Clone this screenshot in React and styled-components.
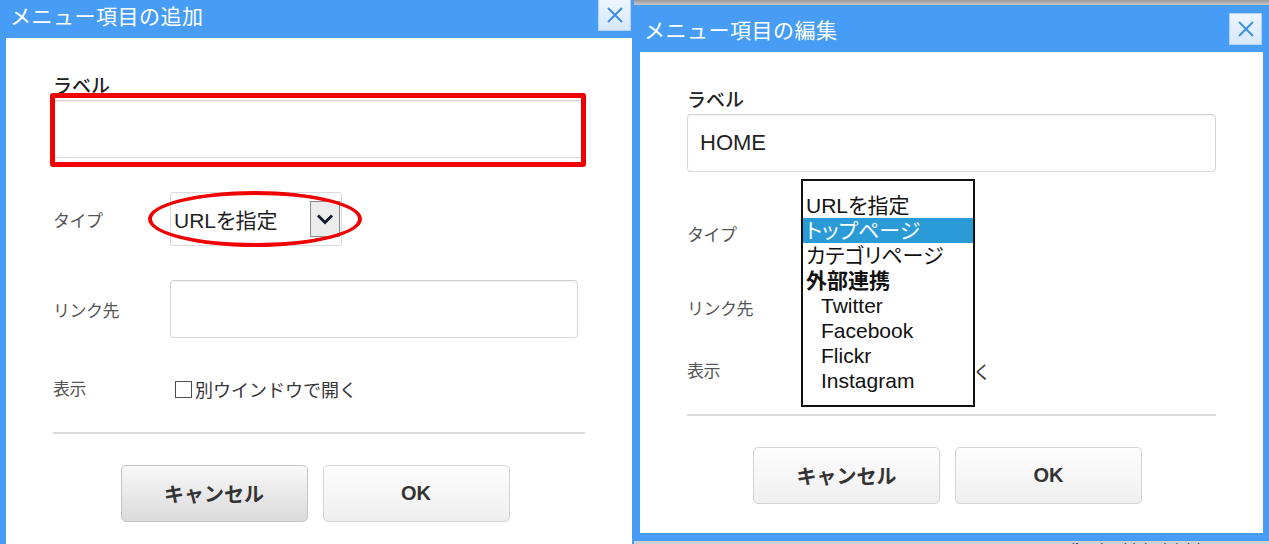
import styled, { createGlobalStyle } from "styled-components";

const GlobalStyle = createGlobalStyle`
  html, body {
    margin: 0;
    padding: 0;
  }
  body {
    font-family: "Liberation Sans", "Noto Sans CJK JP", sans-serif;
    background: #fff;
  }
`;

// two dialog captures side by side
const Page = styled.div`
  display: flex;
  width: 1269px;
  height: 544px;
  overflow: hidden;
`;

const Shot = styled.div`
  flex: none;
  width: ${p => p.$width}px;
  height: 544px;
  overflow: hidden;
  display: flex;
  flex-direction: column;
  background: #d2d2d2;
`;

const TopStrip = styled.div`
  flex: none;
  height: 5px;
  background: linear-gradient(#9a9a9a, #c6c6c6);
`;

const Footer = styled.div`
  flex: 1;
  display: flex;
  gap: 170px;
  padding-left: 238px;
  overflow: hidden;
  background: #d0d0d0;
  font-size: 14px;
  line-height: 14px;
  color: #1d3c78;
  span {
    margin-top: 1px;
    text-decoration: underline;
  }
`;

const Dialog = styled.div`
  flex: none;
  width: ${p => p.$width}px;
  margin-top: ${p => p.$offset || 0}px;
  box-sizing: border-box;
  padding: 0 6px 8px;
  background: #479df5;
`;

const TitleBar = styled.div`
  height: 47px;
  display: flex;
  align-items: center;
  justify-content: space-between;
  padding-left: 4px;
  padding-right: 1px;
`;

const Title = styled.div`
  font-family: "Noto Sans CJK JP", sans-serif;
  font-size: 21px;
  color: #fff;
  letter-spacing: 0.5px;
`;

const CloseButton = styled.button`
  width: 33px;
  height: 32px;
  padding: 0;
  display: flex;
  align-items: center;
  justify-content: center;
  border: 1px solid #b7d3f3;
  background: linear-gradient(#edf5ff, #d7e8fc);
`;

const Body = styled.div`
  background: #fff;
  padding: 36px 47px ${p => p.$bottom || 28}px;
  display: flex;
  flex-direction: column;
`;

const FieldTitle = styled.div`
  font-family: "Noto Sans CJK JP", sans-serif;
  font-size: 19px;
  font-weight: 500;
  line-height: 22px;
  color: #222;
  margin-bottom: 4px;
`;

const Marked = styled.div`
  position: relative;
`;

const RedBox = styled.div`
  position: absolute;
  left: -3px;
  right: -1px;
  top: -7px;
  bottom: -9px;
  border: 5px solid #f00000;
  border-radius: 3px;
`;

const TextInput = styled.div`
  box-sizing: border-box;
  width: ${p => (p.$width ? `${p.$width}px` : "100%")};
  height: ${p => p.$height || 58}px;
  border: 1px solid #d8d8d8;
  border-top-color: #cfcfcf;
  border-radius: 4px;
  box-shadow: inset 0 1px 2px rgba(0, 0, 0, 0.06);
  display: flex;
  align-items: center;
  padding: 0 12px;
  font-size: 22px;
  color: #222;
`;

const Row = styled.div`
  display: grid;
  grid-template-columns: 117px 1fr;
  align-items: center;
  height: ${p => p.$h}px;
  margin-top: 34px;
`;

const RowLabel = styled.div`
  font-family: "Noto Sans CJK JP", sans-serif;
  font-size: 17px;
  color: #555;
  letter-spacing: -0.5px;
`;

const Control = styled.div`
  position: relative;
  display: flex;
  align-items: center;
  height: 100%;
`;

const Select = styled.div`
  box-sizing: border-box;
  width: 172px;
  height: 54px;
  border: 1px solid #dadada;
  border-radius: 3px;
  display: flex;
  align-items: center;
  justify-content: space-between;
  padding: 0 1px 0 3px;
  font-size: 21px;
  color: #1e1e1e;
  font-feature-settings: "palt";
`;

const ArrowBox = styled.div`
  width: 30px;
  height: 36px;
  box-sizing: border-box;
  border: 1px solid #8a8a8a;
  background: #ececec;
  display: flex;
  align-items: center;
  justify-content: center;
`;

const RedRing = styled.div`
  position: absolute;
  left: -22px;
  top: -1px;
  width: 214px;
  height: 56px;
  box-sizing: border-box;
  border: 4px solid #f00000;
  border-radius: 50%;
`;

const ListBox = styled.div`
  position: absolute;
  left: -3px;
  top: -27px;
  width: 174px;
  box-sizing: border-box;
  border: 2px solid #111;
  background: #fff;
  padding: 12px 0;
  z-index: 2;
`;

const Option = styled.div`
  height: 25px;
  line-height: 25px;
  padding-left: ${p => (p.$sub ? 18 : 3)}px;
  font-size: 21px;
  font-weight: ${p => (p.$group ? 700 : 400)};
  color: ${p => (p.$active ? "#fff" : "#111")};
  background: ${p => (p.$active ? "#2a9bd7" : "transparent")};
  font-feature-settings: "palt";
  white-space: nowrap;
`;

const Check = styled.label`
  display: flex;
  align-items: center;
  gap: 3px;
  margin-left: 5px;
  margin-top: 4px;
  font-family: "Noto Sans CJK JP", sans-serif;
  font-size: 18px;
  color: #333;
`;

const CheckBox = styled.span`
  width: 15px;
  height: 15px;
  border: 1.5px solid #4d4d4d;
  background: #fff;
`;

const Rule = styled.hr`
  margin: 34px 0 0;
  border: none;
  border-top: 2px solid #dcdcdc;
`;

const Buttons = styled.div`
  display: flex;
  justify-content: center;
  gap: 15px;
  margin-top: 31px;
  padding-right: 8px;
`;

const Button = styled.button`
  width: 187px;
  height: 57px;
  border-radius: 5px;
  border: 1px solid ${p => (p.$pressed ? "#c3c3c3" : "#d4d4d4")};
  background: ${p =>
    p.$pressed
      ? "linear-gradient(#f8f8f8, #dadada)"
      : "linear-gradient(#fdfdfd, #efefef)"};
  font-family: "Liberation Sans", "Noto Sans CJK JP", sans-serif;
  font-size: 20px;
  font-weight: 700;
  color: #333;
`;

function CloseIcon() {
  return (
    <svg width="18" height="18" viewBox="0 0 18 18">
      <path d="M2 2 L16 16 M16 2 L2 16" stroke="#3d8fe6" strokeWidth="2" fill="none" />
    </svg>
  );
}

function Chevron() {
  return (
    <svg width="18" height="12" viewBox="0 0 18 12">
      <path d="M2 2.5 L9 9.5 L16 2.5" stroke="#0f1830" strokeWidth="2.8" fill="none" />
    </svg>
  );
}

const typeOptions = [
  { text: "URLを指定" },
  { text: "トップページ", active: true },
  { text: "カテゴリページ" },
  { text: "外部連携", group: true },
  { text: "Twitter", sub: true },
  { text: "Facebook", sub: true },
  { text: "Flickr", sub: true },
  { text: "Instagram", sub: true },
];

function AddDialog() {
  return (
    <Dialog $width={638} $offset={-9}>
      <TitleBar>
        <Title>メニュー項目の追加</Title>
        <CloseButton><CloseIcon /></CloseButton>
      </TitleBar>
      <Body>
        <FieldTitle>ラベル</FieldTitle>
        <Marked>
          <TextInput />
          <RedBox />
        </Marked>
        <Row $h={54}>
          <RowLabel>タイプ</RowLabel>
          <Control>
            <Select>
              URLを指定
              <ArrowBox><Chevron /></ArrowBox>
            </Select>
            <RedRing />
          </Control>
        </Row>
        <Row $h={58}>
          <RowLabel>リンク先</RowLabel>
          <Control>
            <TextInput $width={408} $height={58} />
          </Control>
        </Row>
        <Row $h={26}>
          <RowLabel>表示</RowLabel>
          <Control>
            <Check><CheckBox />別ウインドウで開く</Check>
          </Control>
        </Row>
        <Rule />
        <Buttons>
          <Button $pressed>キャンセル</Button>
          <Button>OK</Button>
        </Buttons>
      </Body>
    </Dialog>
  );
}

function EditDialog() {
  return (
    <Dialog $width={635}>
      <TitleBar>
        <Title>メニュー項目の編集</Title>
        <CloseButton><CloseIcon /></CloseButton>
      </TitleBar>
      <Body $bottom={29}>
        <FieldTitle>ラベル</FieldTitle>
        <TextInput>HOME</TextInput>
        <Row $h={54}>
          <RowLabel>タイプ</RowLabel>
          <Control>
            <ListBox>
              {typeOptions.map(o => (
                <Option key={o.text} $active={o.active} $group={o.group} $sub={o.sub}>
                  {o.text}
                </Option>
              ))}
            </ListBox>
          </Control>
        </Row>
        <Row $h={26}>
          <RowLabel>リンク先</RowLabel>
          <Control />
        </Row>
        <Row $h={26}>
          <RowLabel>表示</RowLabel>
          <Control>
            <Check><CheckBox />別ウインドウで開く</Check>
          </Control>
        </Row>
        <Rule />
        <Buttons>
          <Button>キャンセル</Button>
          <Button>OK</Button>
        </Buttons>
      </Body>
    </Dialog>
  );
}

export default function App() {
  return (
    <>
      <GlobalStyle />
      <Page>
        <Shot $width={634}>
          <AddDialog />
        </Shot>
        <Shot $width={635}>
          <TopStrip />
          <EditDialog />
          <Footer>
            <span>URL</span>
            <span>/facebook/2/14/4/4/9b</span>
          </Footer>
        </Shot>
      </Page>
    </>
  );
}
